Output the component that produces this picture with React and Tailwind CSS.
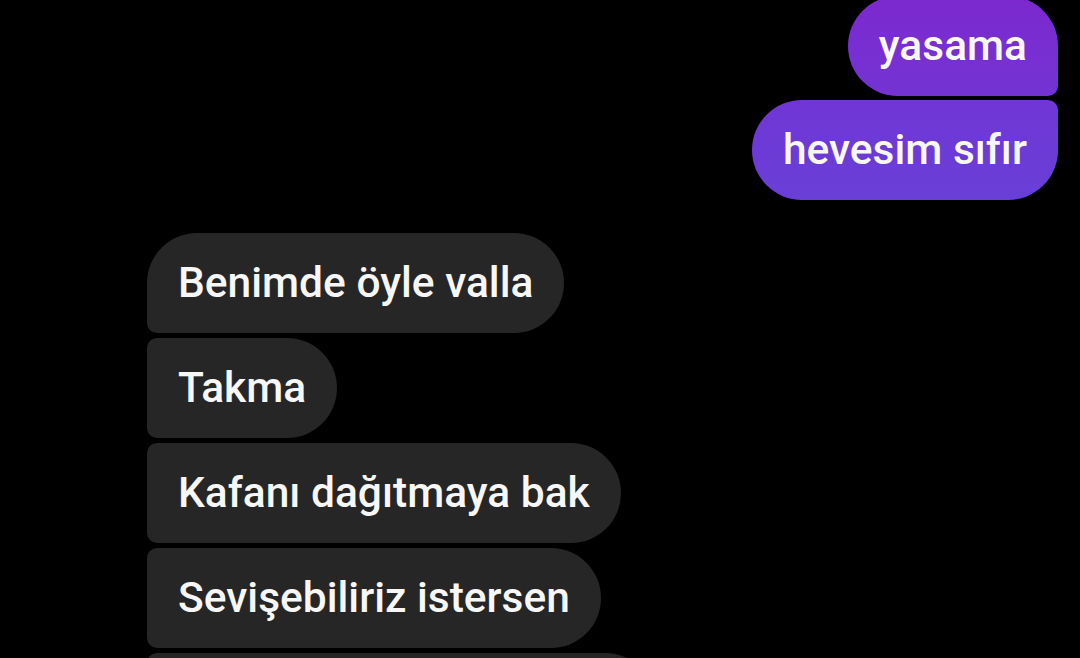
import React from "react";

const gonderilen = [
  { id: 1, metin: "yasama", kose: "rounded-[50px] rounded-br-[10px]", renk: "from-[#7c29cf] to-[#7433d3]" },
  { id: 2, metin: "hevesim sıfır", kose: "rounded-[50px] rounded-tr-[10px]", renk: "from-[#7036d5] to-[#693fd8]" },
];

const gelen = [
  { id: 3, metin: "Benimde öyle valla", kose: "rounded-[50px] rounded-bl-[10px]" },
  { id: 4, metin: "Takma", kose: "rounded-[50px] rounded-tl-[10px] rounded-bl-[10px]" },
  { id: 5, metin: "Kafanı dağıtmaya bak", kose: "rounded-[50px] rounded-tl-[10px] rounded-bl-[10px]" },
  { id: 6, metin: "Sevişebiliriz istersen", kose: "rounded-[50px] rounded-tl-[10px] rounded-bl-[10px]" },
];

export default function App() {
  return (
    <div
      className="w-[1080px] h-[658px] overflow-hidden bg-black text-[#f7f7f7]"
      style={{ fontFamily: "Roboto, 'Noto Sans', sans-serif" }}
    >
      {/* giden mesajlar */}
      <div className="flex flex-col items-end gap-[4px] pr-[22px] -mt-[4px]">
        {gonderilen.map((m) => (
          <div
            key={m.id}
            className={`h-[100px] flex items-center px-[31px] bg-gradient-to-b ${m.renk} ${m.kose} text-[42.5px] font-medium`}
          >
            {m.metin}
          </div>
        ))}
      </div>

      {/* gelen mesajlar */}
      <div className="flex flex-col items-start gap-[5px] pl-[147px] mt-[33px]">
        {gelen.map((m) => (
          <div
            key={m.id}
            className={`h-[100px] flex items-center px-[31px] bg-[#262626] ${m.kose} text-[42.5px] font-medium whitespace-nowrap`}
          >
            {m.metin}
          </div>
        ))}
        {/* alttaki, ekranın dışına taşan balon */}
        <div className="h-[100px] w-[508px] bg-[#262626] rounded-[50px] rounded-tl-[10px]" />
      </div>
    </div>
  );
}
